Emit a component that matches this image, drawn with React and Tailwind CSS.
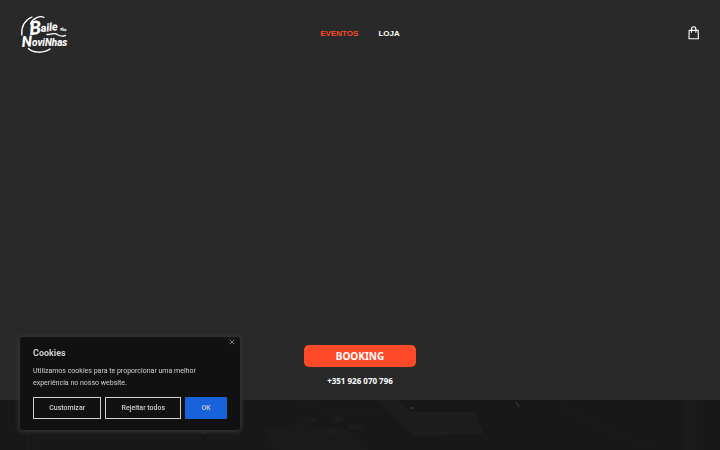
import { useState } from "react";

const links = [
  { label: "EVENTOS", href: "#eventos", active: true },
  { label: "LOJA", href: "#loja", active: false },
];

function Logo() {
  return (
    <svg viewBox="0 0 48 40" className="h-10 w-12" role="img" aria-label="Baile das Novinhas">
      <g fill="none" stroke="#fff" strokeLinecap="round">
        <path d="M12 3C5 6 1.200 12 1.800 21" strokeWidth="1.300" />
        <path d="M8.500 34.500c4 4.500 15 5 21.500.5" strokeWidth="1.500" />
        <path d="M10.500 10C12 5 20 .8 24 3.500" strokeWidth="1.200" />
        <path d="M27 20.500c5 .2 6-1.800 9-.6 3 1.400 5 3.600 9.500 1.400" strokeWidth="1.300" />
      </g>
      <g
        fill="#fff"
        stroke="#fff"
        fontFamily="Roboto, 'Liberation Sans', sans-serif"
        fontStyle="italic"
        fontWeight="700"
      >
        <text x="10" y="21" fontSize="19" strokeWidth="0.1" transform="rotate(-6 10 21)">
          B
        </text>
        <text x="21" y="18" fontSize="11" strokeWidth="0.1" transform="rotate(-6 21 18)">
          aile
        </text>
        <text x="40" y="16" fontSize="4" strokeWidth="0.1" transform="rotate(12 40 16)">
          das
        </text>
        <text x="2" y="33" fontSize="15" strokeWidth="0.1" transform="rotate(-4 2 33)">
          N
        </text>
        <text x="12" y="32" fontSize="10" strokeWidth="0.1">
          oviNhas
        </text>
      </g>
    </svg>
  );
}

function BagIcon() {
  return (
    <svg viewBox="0 0 12 14" className="h-3.5 w-3" fill="none" stroke="#fff" strokeWidth="1.1">
      <path d="M1.200 4.400h9l.2 8.400H1z" strokeLinejoin="round" />
      <path d="M3.500 6.300V3a2.200 2.200 0 0 1 4.400 0v3.300" strokeLinecap="round" />
    </svg>
  );
}

function Header() {
  return (
    <header className="grid grid-cols-[1fr_auto_1fr] items-center px-5 py-3.5">
      <a href="#inicio" className="justify-self-start">
        <Logo />
      </a>
      <nav className="flex gap-5 font-['Liberation_Sans',sans-serif] text-[8px] font-bold">
        {links.map((link) => (
          <a
            key={link.label}
            href={link.href}
            className={link.active ? "text-[#ff4a2a]" : "text-white"}
          >
            {link.label}
          </a>
        ))}
      </nav>
      <button type="button" aria-label="Carrinho" className="justify-self-end pb-0.5">
        <BagIcon />
      </button>
    </header>
  );
}

function Backdrop() {
  return (
    <section className="h-[50px] overflow-hidden bg-[#181818]">
      <svg viewBox="0 0 720 50" preserveAspectRatio="xMidYMin slice" className="h-full w-full" aria-hidden="true">
        <path d="M376 0h20l40 34-22 2z" fill="#1c1c1c" />
        <path d="M408 12l66 0 10 22-66 2z" fill="#1d1d1d" />
        <path d="M264 29l34-5 50 6 20 20h-95z" fill="#1a1a1a" />
        <path d="M300 4l50 10 28-6M560 4l30 18 60 26" stroke="#1c1c1c" fill="none" />
        <g fill="#1d1d1d">
          <ellipse cx="310" cy="20" rx="8" ry="3" />
          <ellipse cx="337" cy="19" rx="5" ry="3" />
          <ellipse cx="355" cy="27" rx="8" ry="3" />
          <ellipse cx="333" cy="31" rx="7" ry="3" />
        </g>
        <path d="M683 0h14v50h-14zM27 0h2v50h-2zM38 0h1v50h-1z" fill="#1b1b1b" />
        <path d="M515 2l3 3 1 2M410 8h4M202 32h3" stroke="#404040" fill="none" />
      </svg>
    </section>
  );
}

function CookieNotice({ onClose }) {
  return (
    <aside
      aria-label="Cookies"
      className="fixed bottom-5 left-5 w-[220px] rounded-[3px] bg-[#111] px-[13px] pt-2.5 pb-[11px] font-[Roboto,sans-serif] text-[#d0d0d0] shadow-[0_0_4px_2px_#333]"
    >
      <button
        type="button"
        aria-label="Fechar"
        onClick={onClose}
        className="absolute top-px right-1 p-px"
      >
        <svg viewBox="0 0 6 6" className="size-1.5" stroke="#999" strokeWidth="0.8">
          <path d="M.8.8l4.400 4.400M5.200.8L.8 5.200" />
        </svg>
      </button>
      <h2 className="text-[9px] leading-3 font-bold">Cookies</h2>
      <p className="mt-1.5 text-[7px] leading-3">
        Utilizamos cookies para te proporcionar uma melhor experiência no nosso website.
      </p>
      <div className="mt-2 flex gap-1 text-[7px] leading-3 font-medium">
        <button type="button" className="h-[22px] grow border border-[#d0d0d0] px-3.5">
          Customizar
        </button>
        <button type="button" onClick={onClose} className="h-[22px] grow border border-[#d0d0d0] px-3.5">
          Rejeitar todos
        </button>
        <button type="button" onClick={onClose} className="h-[22px] grow border border-[#1863dc] bg-[#1863dc] px-3.5">
          OK
        </button>
      </div>
    </aside>
  );
}

export default function App() {
  const [showCookies, setShowCookies] = useState(true);

  return (
    <div className="flex min-h-screen flex-col bg-[#292929] text-white">
      <Header />
      <main className="flex grow flex-col items-center justify-end pb-[13px] font-['Noto_Sans',sans-serif] font-bold">
        <button
          type="button"
          className="rounded-[5px] bg-[#ff4a2a] px-8 py-[5px] text-[10px] leading-3"
        >
          BOOKING
        </button>
        <a href="tel:+351926070796" className="mt-2 text-[8px] leading-3">
          +351 926 070 796
        </a>
      </main>
      <Backdrop />
      {showCookies && <CookieNotice onClose={() => setShowCookies(false)} />}
    </div>
  );
}
